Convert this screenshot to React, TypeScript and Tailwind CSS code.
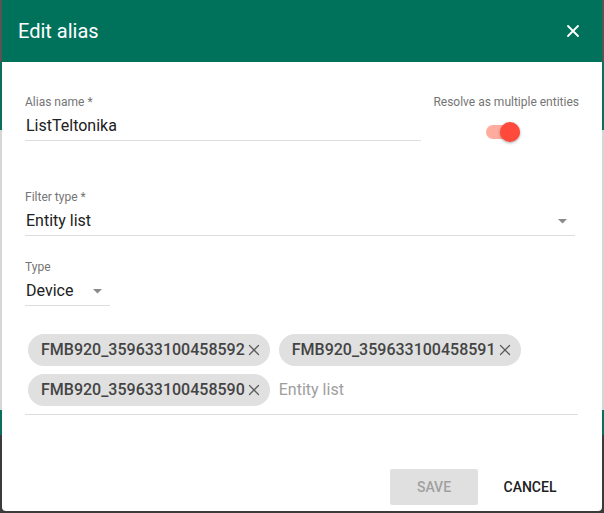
import { X } from 'lucide-react';

const chips = ['FMB920_359633100458592', 'FMB920_359633100458591', 'FMB920_359633100458590'];

const Caret = () => (
  <svg width="9" height="5" viewBox="0 0 9 5" className="fill-[#8a8a8a]">
    <path d="M0 0 L9 0 L4.5 4.5 Z" />
  </svg>
);

const EdgeStrip = () => (
  <div className="flex w-[2px] flex-col">
    <div className="h-[62px] bg-[#555555]" />
    <div className="h-[68px] bg-[#0a6f5c]" />
    <div className="h-[280px] bg-[#d6d6d6]" />
    <div className="h-[25px] bg-[#0a6f5c]" />
    <div className="flex-1 bg-[#3b3b3b]" />
  </div>
);

export default function App() {
  return (
    <div className="flex h-[513px] w-[604px] overflow-hidden bg-[#3b3b3b] font-['Roboto',sans-serif]">
      <EdgeStrip />

      <div className="flex h-[511px] w-[600px] flex-col overflow-hidden rounded-b-[4px] bg-white">
        {/* Header */}
        <div className="flex h-[62px] items-center justify-between bg-[#00725c] pl-[16px] pr-[19px]">
          <h2 className="text-[20px] font-normal text-white">Edit alias</h2>
          <X size={20} strokeWidth={2.2} className="text-white" />
        </div>

        {/* Body */}
        <div className="flex flex-1 flex-col px-[23px] pt-[33px]">
          <div className="flex">
            <div className="w-[396px]">
              <div className="text-[12px] leading-[14px] text-[#757575]">Alias name *</div>
              <div className="mt-[7px] pl-px text-[16px] leading-[20px] text-[#212121]">ListTeltonika</div>
              <div className="mt-[4px] h-px bg-[#dedede]" />
            </div>
            <div className="ml-auto flex flex-col items-center">
              <div className="text-[12px] leading-[14px] text-[#757575]">Resolve as multiple entities</div>
              <div className="relative mr-[7px] mt-[13px] h-[20px] w-[36px]">
                <div className="absolute left-[1px] top-[3px] h-[14px] w-[34px] rounded-full bg-[#ffac9f]" />
                <div className="absolute left-[15px] top-0 h-[20px] w-[20px] rounded-full bg-[#ff4a3b] shadow-[0_1px_3px_rgba(0,0,0,0.35)]" />
              </div>
            </div>
          </div>

          <div className="mt-[48px] w-[550px]">
            <div className="text-[12px] leading-[14px] text-[#757575]">Filter type *</div>
            <div className="mt-[7px] flex items-center justify-between pl-px pr-[8px] text-[16px] leading-[20px] text-[#212121]">
              <span>Entity list</span>
              <Caret />
            </div>
            <div className="mt-[4px] h-px bg-[#dedede]" />
          </div>

          <div className="mt-[24px] w-[85px]">
            <div className="text-[12px] leading-[14px] text-[#757575]">Type</div>
            <div className="mt-[7px] flex items-center justify-between pl-px pr-[8px] text-[16px] leading-[20px] text-[#212121]">
              <span>Device</span>
              <Caret />
            </div>
            <div className="mt-[4px] h-px bg-[#dedede]" />
          </div>

          <div className="mt-[28px] w-[553px]">
            <div className="flex flex-wrap gap-x-[9px] gap-y-[8px] pl-[3px]">
              {chips.map((c) => (
                <div
                  key={c}
                  className="flex h-[32px] items-center rounded-full bg-[#e0e0e0] pl-[13px] pr-[7px] text-[16px] font-medium text-[#444444]"
                >
                  <span>{c}</span>
                  <X size={18} strokeWidth={1.7} className="text-[#5c5c5c]" />
                </div>
              ))}
              <div className="flex h-[32px] items-center text-[16px] text-[#9e9e9e]">Entity list</div>
            </div>
            <div className="mt-[8px] h-px bg-[#dedede]" />
          </div>

          <div className="mt-auto mb-[6px] flex justify-end gap-[8px] pr-[5px]">
            <button className="h-[36px] w-[88px] rounded-[2px] bg-[#e0e0e0] text-[14px] font-medium text-[#a0a0a0]">SAVE</button>
            <button className="h-[36px] w-[88px] text-[14px] font-medium text-[#212121]">CANCEL</button>
          </div>
        </div>
      </div>

      <EdgeStrip />
    </div>
  );
}
